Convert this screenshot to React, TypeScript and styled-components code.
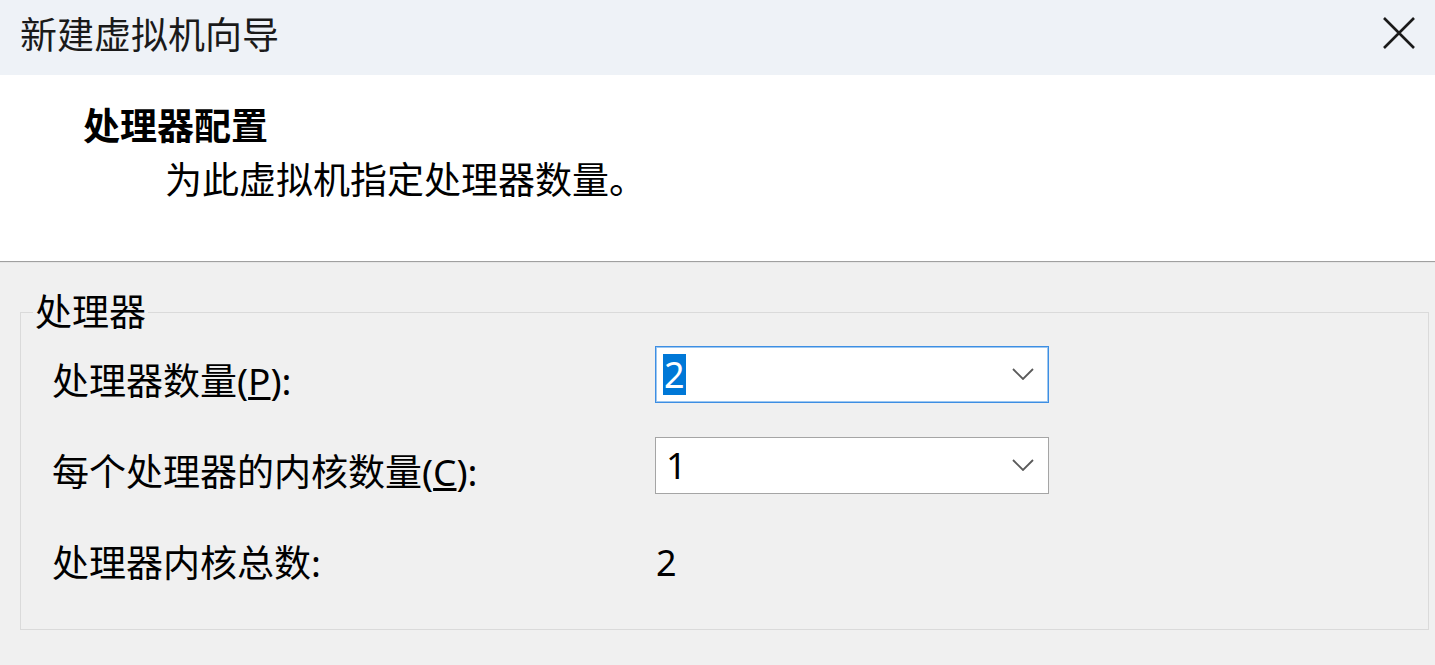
import styled, { createGlobalStyle } from 'styled-components';

const GlobalStyle = createGlobalStyle`
  html, body {
    margin: 0;
    padding: 0;
    background: #f0f0f0;
  }
  body {
    font-family: 'Noto Sans', 'Noto Sans CJK SC', sans-serif;
    color: #000;
  }
`;

const Window = styled.div`
  width: 1435px;
  height: 665px;
  display: flex;
  flex-direction: column;
  overflow: hidden;
`;

const TitleBar = styled.div`
  height: 75px;
  flex: none;
  display: flex;
  align-items: center;
  justify-content: space-between;
  padding: 0 16px 0 20px;
  background: #eef2f7;
`;

const Title = styled.span`
  font-size: 37px;
  line-height: 44px;
  color: #1a1a1a;
  margin-top: -6px;
`;

const CloseButton = styled.button`
  width: 40px;
  height: 40px;
  margin-top: -9px;
  border: none;
  background: transparent;
  padding: 0;
  display: grid;
  place-items: center;
  color: #1a1a1a;
`;

const Header = styled.div`
  height: 187px;
  flex: none;
  background: #fff;
  padding: 29px 0 0 83px;
  box-sizing: border-box;
  border-bottom: 1px solid #a0a0a0;
`;

const HeaderTitle = styled.div`
  font-size: 37px;
  line-height: 44px;
  font-weight: 700;
`;

const HeaderDesc = styled.div`
  font-size: 37px;
  line-height: 44px;
  margin: 10px 0 0 82px;
`;

const Body = styled.div`
  flex: 1;
  background: #f0f0f0;
  border-top: 1px solid #e6e6e6;
  padding: 27px 6px 0 20px;
`;

const Group = styled.fieldset`
  margin: 0;
  padding: 11px 0 45px 31px;
  border: 1px solid #dadada;
  border-radius: 0;
  min-width: 0;
`;

const Legend = styled.legend`
  font-size: 37px;
  line-height: 44px;
  padding: 0 2px;
  margin-left: -19px;
`;

const Rows = styled.div`
  display: flex;
  flex-direction: column;
  gap: 34px;
`;

const Row = styled.div`
  display: grid;
  grid-template-columns: 603px 394px;
  height: 57px;
  align-items: center;
`;

const Label = styled.span`
  font-size: 37px;
  line-height: 44px;
  margin-top: 14px;
  white-space: nowrap;
`;

const Value = styled.span`
  font-size: 36px;
  line-height: 44px;
  margin-top: 14px;
  padding-left: 1px;
`;

const Combo = styled.div<{ $focused?: boolean }>`
  height: 57px;
  box-sizing: border-box;
  border: 1px solid ${({ $focused }) => ($focused ? '#3d8ee3' : '#a5a5a5')};
  box-shadow: ${({ $focused }) => ($focused ? 'inset 0 0 0 1px #9cc7f1' : 'none')};
  background: #fff;
  display: flex;
  align-items: center;
  justify-content: space-between;
  padding: 0 14px 0 7px;
`;

const ComboText = styled.span<{ $selected?: boolean }>`
  font-size: 36px;
  line-height: 41px;
  padding: 0 ${({ $selected }) => ($selected ? '1px' : '3px')};
  background: ${({ $selected }) => ($selected ? '#0078d7' : 'transparent')};
  color: ${({ $selected }) => ($selected ? '#fff' : '#000')};
`;

const Chevron = () => (
  <svg width="22" height="12" viewBox="0 0 22 12">
    <path d="M1 1 L11 11 L21 1" fill="none" stroke="#5a5a5a" strokeWidth="1.8" />
  </svg>
);

export default function App() {
  return (
    <>
      <GlobalStyle />
      <Window>
        <TitleBar>
          <Title>新建虚拟机向导</Title>
          <CloseButton aria-label="关闭">
            <svg width="34" height="34" viewBox="0 0 34 34">
              <path d="M2 2 L32 32 M32 2 L2 32" stroke="#1a1a1a" strokeWidth="2.6" />
            </svg>
          </CloseButton>
        </TitleBar>
        <Header>
          <HeaderTitle>处理器配置</HeaderTitle>
          <HeaderDesc>为此虚拟机指定处理器数量。</HeaderDesc>
        </Header>
        <Body>
          <Group>
            <Legend>处理器</Legend>
            <Rows>
              <Row>
                <Label>
                  处理器数量(<u>P</u>):
                </Label>
                <Combo $focused>
                  <ComboText $selected>2</ComboText>
                  <Chevron />
                </Combo>
              </Row>
              <Row>
                <Label>
                  每个处理器的内核数量(<u>C</u>):
                </Label>
                <Combo>
                  <ComboText>1</ComboText>
                  <Chevron />
                </Combo>
              </Row>
              <Row>
                <Label>处理器内核总数:</Label>
                <Value>2</Value>
              </Row>
            </Rows>
          </Group>
        </Body>
      </Window>
    </>
  );
}
